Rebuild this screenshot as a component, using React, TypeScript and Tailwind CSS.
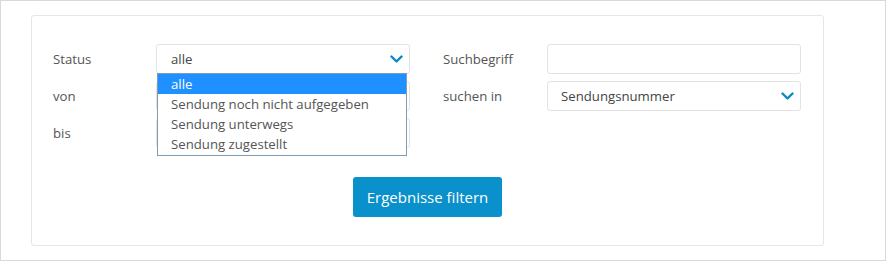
import React from 'react';

const Chevron = () => (
  <svg width="13" height="9" viewBox="0 0 13 9" className="shrink-0">
    <path d="M1.5 1.5 L6.5 6.5 L11.5 1.5" fill="none" stroke="#0a88c6" strokeWidth="2.4" strokeLinecap="round" strokeLinejoin="round" />
  </svg>
);

const options = ['alle', 'Sendung noch nicht aufgegeben', 'Sendung unterwegs', 'Sendung zugestellt'];

const App = () => {
  return (
    <div className="w-[886px] h-[261px] bg-white border border-[#d9d9d9] pt-[14px] pl-[30px] font-['Open_Sans',sans-serif] text-[13.2px]">
      <div className="w-[793px] h-[231px] border border-[#e6e6e6] rounded-[3px] bg-white pt-[28px] px-[21px]">
        <div className="flex">
          {/* Left column */}
          <div className="flex flex-col gap-[7px]">
            <div className="flex items-center h-[30px]">
              <span className="w-[103px] text-[#555] pt-[1px]">Status</span>
              <div className="relative">
                <div className="w-[254px] h-[30px] border border-[#e3e3e3] rounded-[3px] flex items-center justify-between pl-[14px] pr-[6px] text-[#444]">
                  <span className="pt-[1px]">alle</span>
                  <Chevron />
                </div>
                {/* Open dropdown */}
                <div className="absolute left-[1px] top-[29px] w-[250px] border border-[#7f9db9] bg-white z-10 pb-[1px]">
                  {options.map((o, i) => (
                    <div
                      key={o}
                      className={`h-[20px] leading-[20px] pl-[13px] ${i === 0 ? 'bg-[#1e90ff] text-white' : 'text-[#555]'}`}
                    >
                      {o}
                    </div>
                  ))}
                </div>
              </div>
            </div>
            <div className="flex items-center h-[30px]">
              <span className="w-[103px] text-[#555] pt-[1px]">von</span>
              <div className="w-[254px] h-[30px] border border-[#e3e3e3] rounded-[3px]" />
            </div>
            <div className="flex items-center h-[30px]">
              <span className="w-[103px] text-[#555] pt-[1px]">bis</span>
              <div className="w-[254px] h-[30px] border border-[#e3e3e3] rounded-[3px]" />
            </div>
          </div>

          {/* Right column */}
          <div className="flex flex-col gap-[7px] ml-[33px]">
            <div className="flex items-center h-[30px]">
              <span className="w-[104px] text-[#555] pt-[1px]">Suchbegriff</span>
              <div className="w-[254px] h-[30px] border border-[#e3e3e3] rounded-[3px]" />
            </div>
            <div className="flex items-center h-[30px]">
              <span className="w-[104px] text-[#555] pt-[1px]">suchen in</span>
              <div className="w-[254px] h-[30px] border border-[#e3e3e3] rounded-[3px] flex items-center justify-between pl-[13px] pr-[6px] text-[#444]">
                <span className="pt-[1px]">Sendungsnummer</span>
                <Chevron />
              </div>
            </div>
          </div>
        </div>

        <div className="flex justify-center mt-[29px]">
          <button className="h-[40px] px-[14px] rounded-[3px] bg-[#0a90cb] text-white text-[15px]">
            Ergebnisse filtern
          </button>
        </div>
      </div>
    </div>
  );
};

export default App;
